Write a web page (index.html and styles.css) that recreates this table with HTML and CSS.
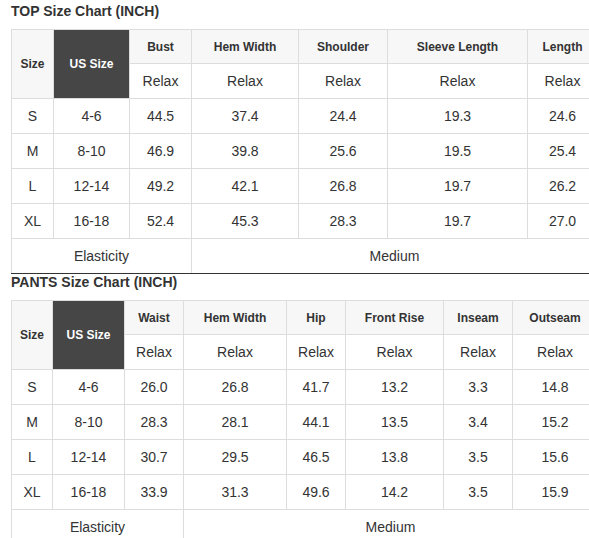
FILE: index.html
```html
<!DOCTYPE html>
<html lang="en">
<head>
    <meta charset="UTF-8">
    <meta name="viewport" content="width=device-width, initial-scale=1.0">
    <title>Size Chart</title>
    <link rel="stylesheet" href="styles.css">
</head>
<body>
    <div class="wrapper">
        <!-- Top chart -->
        <h3 class="chart-title">TOP Size Chart (INCH)</h3>
        <table class="size-table top-table">
            <colgroup>
                <col><col><col><col><col><col><col>
            </colgroup>
            <tr class="head-row">
                <th rowspan="2">Size</th>
                <th rowspan="2" class="us">US Size</th>
                <th>Bust</th>
                <th>Hem Width</th>
                <th>Shoulder</th>
                <th>Sleeve Length</th>
                <th>Length</th>
            </tr>
            <tr>
                <td>Relax</td><td>Relax</td><td>Relax</td><td>Relax</td><td>Relax</td>
            </tr>
            <tr>
                <td>S</td><td>4-6</td><td>44.5</td><td>37.4</td><td>24.4</td><td>19.3</td><td>24.6</td>
            </tr>
            <tr>
                <td>M</td><td>8-10</td><td>46.9</td><td>39.8</td><td>25.6</td><td>19.5</td><td>25.4</td>
            </tr>
            <tr>
                <td>L</td><td>12-14</td><td>49.2</td><td>42.1</td><td>26.8</td><td>19.7</td><td>26.2</td>
            </tr>
            <tr>
                <td>XL</td><td>16-18</td><td>52.4</td><td>45.3</td><td>28.3</td><td>19.7</td><td>27.0</td>
            </tr>
            <tr class="elastic">
                <td colspan="3">Elasticity</td>
                <td colspan="4">Medium</td>
            </tr>
        </table>

        <!-- Pants chart -->
        <h3 class="chart-title">PANTS Size Chart (INCH)</h3>
        <table class="size-table pants-table">
            <colgroup>
                <col><col><col><col><col><col><col><col>
            </colgroup>
            <tr class="head-row">
                <th rowspan="2">Size</th>
                <th rowspan="2" class="us">US Size</th>
                <th>Waist</th>
                <th>Hem Width</th>
                <th>Hip</th>
                <th>Front Rise</th>
                <th>Inseam</th>
                <th>Outseam</th>
            </tr>
            <tr>
                <td>Relax</td><td>Relax</td><td>Relax</td><td>Relax</td><td>Relax</td><td>Relax</td>
            </tr>
            <tr>
                <td>S</td><td>4-6</td><td>26.0</td><td>26.8</td><td>41.7</td><td>13.2</td><td>3.3</td><td>14.8</td>
            </tr>
            <tr>
                <td>M</td><td>8-10</td><td>28.3</td><td>28.1</td><td>44.1</td><td>13.5</td><td>3.4</td><td>15.2</td>
            </tr>
            <tr>
                <td>L</td><td>12-14</td><td>30.7</td><td>29.5</td><td>46.5</td><td>13.8</td><td>3.5</td><td>15.6</td>
            </tr>
            <tr>
                <td>XL</td><td>16-18</td><td>33.9</td><td>31.3</td><td>49.6</td><td>14.2</td><td>3.5</td><td>15.9</td>
            </tr>
            <tr class="elastic">
                <td colspan="3">Elasticity</td>
                <td colspan="5">Medium</td>
            </tr>
        </table>
    </div>
</body>
</html>
```

FILE: styles.css
```css
* {
    margin: 0;
    padding: 0;
    box-sizing: border-box;
}

html {
    overflow: hidden;
}

body {
    font-family: "Liberation Sans", Arial, sans-serif;
    color: #333;
    background-color: #fff;
}

.wrapper {
    padding: 3px 0 0 11px;
}

/* Titles */
.chart-title {
    font-size: 14px;
    line-height: 16px;
    font-weight: bold;
    color: #333;
    margin-bottom: 10px;
}

/* Tables */
.size-table {
    border-collapse: collapse;
    table-layout: fixed;
    width: 586px;
}

.size-table th,
.size-table td {
    border: 1px solid #ddd;
    text-align: center;
    vertical-align: middle;
    height: 35px;
    font-size: 14px;
    white-space: nowrap;
}

.size-table .head-row th {
    height: 34px;
}

.size-table th {
    font-size: 12px;
    font-weight: bold;
    background-color: #f7f7f7;
}

.size-table th.us {
    background-color: #464646;
    color: #fff;
    font-size: 12px;
}

.size-table .elastic td {
    border-bottom: 1px solid #333;
}

/* Column widths */
.top-table col:nth-child(1) { width: 42px; }
.top-table col:nth-child(2) { width: 76px; }
.top-table col:nth-child(3) { width: 62px; }
.top-table col:nth-child(4) { width: 107px; }
.top-table col:nth-child(5) { width: 89px; }
.top-table col:nth-child(6) { width: 140px; }
.top-table col:nth-child(7) { width: 70px; }

.pants-table col:nth-child(1) { width: 41px; }
.pants-table col:nth-child(2) { width: 72px; }
.pants-table col:nth-child(3) { width: 59px; }
.pants-table col:nth-child(4) { width: 103px; }
.pants-table col:nth-child(5) { width: 59px; }
.pants-table col:nth-child(6) { width: 98px; }
.pants-table col:nth-child(7) { width: 69px; }
.pants-table col:nth-child(8) { width: 85px; }
```
